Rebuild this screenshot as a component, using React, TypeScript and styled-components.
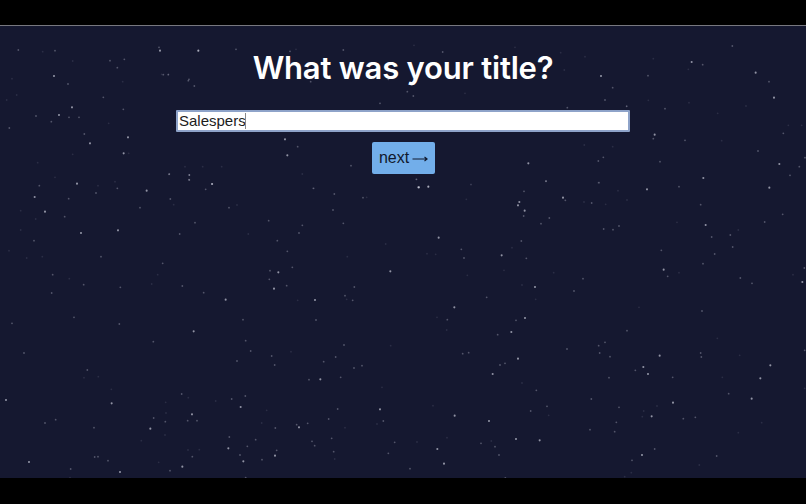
import styled, { createGlobalStyle } from 'styled-components';

const GlobalStyle = createGlobalStyle`
  html, body {
    margin: 0;
    height: 100%;
    background: #000;
  }
`;

const Page = styled.div`
  width: 806px;
  height: 504px;
  display: flex;
  flex-direction: column;
  background: #000;
  overflow: hidden;
`;

const Bar = styled.div<{ $height: number }>`
  height: ${(p) => p.$height}px;
  flex: none;
  background: #000;
`;

const Screen = styled.main`
  position: relative;
  flex: 1;
  display: flex;
  flex-direction: column;
  align-items: center;
  background: #151830;
  border-top: 1px solid #77787f;
`;

const Stars = styled.svg`
  position: absolute;
  top: 0;
  left: 0;
  filter: blur(0.4px);
`;

const Title = styled.h1`
  position: relative;
  margin: 22px 0 0;
  font-family: Inter, 'Noto Sans', sans-serif;
  font-size: 31px;
  line-height: 40px;
  font-weight: 600;
  letter-spacing: -0.2px;
  color: #fff;
`;

const Field = styled.div`
  position: relative;
  width: 454px;
  height: 22px;
  margin-top: 22px;
`;

const Answer = styled.input`
  display: block;
  box-sizing: border-box;
  width: 100%;
  height: 100%;
  padding: 0 1px 2px;
  border: 2px solid #8ea3c9;
  border-radius: 1px;
  outline: none;
  background: #fff;
  font-family: 'Liberation Sans', Arial, sans-serif;
  font-size: 15px;
  color: #1c1c1c;
`;

const Caret = styled.span`
  position: absolute;
  top: 3px;
  left: 69px;
  width: 1px;
  height: 16px;
  background: #8a8a8a;
`;

const NextButton = styled.button`
  position: relative;
  display: flex;
  align-items: center;
  justify-content: center;
  gap: 3px;
  width: 63px;
  height: 32px;
  margin-top: 10px;
  padding: 0 0 0 1px;
  border: none;
  border-radius: 2px;
  background: #72aeea;
  font-family: 'Liberation Sans', Arial, sans-serif;
  font-size: 16px;
  color: #10182c;
`;

const ArrowIcon = () => (
  <svg width="16" height="9" viewBox="0 0 16 9" fill="none" stroke="#10182c" strokeWidth="1.1">
    <path d="M0.5 5h14.5M12.5 3l2.7 2-2.7 2" />
  </svg>
);

// sky read off the reference: crop origin, then x,y pairs at 3x by brightness
type Sky = { ox: number; oy: number; bright: number[]; mid: number[]; faint: number[] };

const skies: Sky[] = [
  {
    ox: 0, oy: 170,
    bright: [104,81,231,41,440,62,636,42,135,125,243,189,354,181,945,390,835,307,1171,304,822,356,677,389],
    mid: [206,86,420,113,511,87,567,29,568,15,507,13,617,58,352,55,118,47,288,69,687,113,806,152,940,55,999,120,1089,83,194,140,539,192,102,212,303,260,488,280,158,314,251,344,361,352,155,369,611,368,547,348,222,442,810,302,808,328,877,292,860,347,1035,377,1058,391,1063,351,907,166,897,189,832,212,862,244,1003,72,1030,160,585,158,948,450,358,462,36,460,729,449],
    faint: [165,22,294,47,345,35,62,122,107,147,62,180,27,242,80,264,127,260,208,326,473,314,455,342,521,104,711,105,1100,82,1157,222,1042,260,1040,388,893,391,745,192,907,12],
  },
  {
    ox: 403, oy: 170,
    bright: [48,52,107,203,732,58,345,106,365,122,349,96,480,83,296,256,396,351,366,444,908,165,1099,53,901,24,154,412,1198,336,782,299],
    mid: [76,50,40,28,429,33,363,64,487,91,362,138,439,144,414,161,566,99,588,38,828,50,893,104,648,168,602,177,630,179,1161,16,1139,133,1085,156,982,195,989,231,926,201,935,252,775,241,900,281,794,319,1012,324,1047,340,1204,294,540,326,513,363,370,265,355,213,175,238,183,264,251,382,897,423,133,449,339,451],
    faint: [204,44,190,88,645,62,608,103,672,90,543,96,327,233,72,251,98,253,193,316,303,301,357,345,398,388,828,308,1170,314,1006,180,822,157,102,442,708,412,452,308],
  },
  {
    ox: 0, oy: 325,
    bright: [581,19,18,225,335,235,722,246,576,268,451,311,897,307,961,163,1140,253,685,370,730,409,825,392,547,425,360,441,87,411],
    mid: [737,47,1032,60,971,110,1007,96,824,120,815,93,711,108,752,78,1062,129,1086,122,927,164,1022,157,262,135,72,84,460,50,736,213,695,222,545,207,135,294,167,284,282,308,461,279,496,290,591,287,563,287,826,309,890,299,923,295,986,282,1013,252,1150,288,995,340,936,349,944,362,688,336,767,344,742,364,720,390,786,404,830,376,577,395,284,396,294,395,324,407,510,437,212,432,737,458,1184,352,1165,385,1001,380],
    faint: [252,158,295,155,334,193,647,228,497,232,498,264,565,218,495,330,424,347,564,375,598,374,476,412,1146,187,1172,62,873,80,1035,308,1131,297,785,294,800,256,1004,402,210,458],
  },
  {
    ox: 403, oy: 325,
    bright: [325,21,345,101,269,147,155,272,258,288,410,346,746,274,810,233,1046,221,1072,160,1102,121,770,92,721,126,735,147,717,390,123,416,103,372,339,342],
    mid: [284,29,179,86,197,83,291,120,306,115,400,196,432,244,383,258,648,247,640,292,635,320,561,314,621,95,590,84,587,62,606,52,672,17,492,72,697,136,809,157,893,84,895,96,841,281,877,277,755,372,234,355,276,365,288,390,21,431,565,222,618,158,1205,76,977,206,941,393,687,406,307,459],
    faint: [131,15,357,174,437,271,42,351,132,338,90,242,265,348,722,258,718,275,1076,293,1006,323,958,157,1010,91,943,40,1205,190,762,243,889,420,685,443,665,455],
  },
  {
    ox: 620, oy: 26,
    bright: [407,140,462,215,478,414,215,108,104,326],
    mid: [84,149,447,167,248,116,135,248,195,343,120,407,100,338,490,322,414,375,337,60,20,241,538,422,555,395],
    faint: [205,130,85,223,207,230,293,262,305,344,378,240,505,298,100,98,545,298],
  },
  {
    ox: 0, oy: 0,
    bright: [162,228,216,322,480,152,595,152],
    mid: [55,150,165,152,330,182,373,178,352,203,310,292,204,252,505,224,490,224,567,238,583,258,370,328,477,142],
    faint: [36,236,20,300,368,245,218,183,50,285,128,155],
  },
  {
    ox: 0, oy: 110,
    bright: [177,15,270,100,371,130,384,82],
    mid: [154,35,28,54,253,72,207,22,237,22,108,18],
    faint: [326,40,218,133,113,158,386,130],
  },
  {
    ox: 160, oy: 40,
    bright: [375,298,382,346,1105,370,1323,108,775,442,805,440],
    mid: [115,32,85,122,1358,143,1335,180,1222,203,660,190,742,155,760,168,452,125,685,118,413,320,573,377,1315,363,1330,352,88,405,88,420,157,432,28,402,1158,424],
    faint: [5,103,25,103,915,160,1213,90,1275,50,1400,198,1273,315,1358,320,770,418,75,380,128,380,185,380,1315,428,933,433,462,445],
  },
  {
    ox: 200, oy: 26,
    bright: [],
    mid: [270,76,430,72,728,78,108,70],
    faint: [288,70,642,58,1082,80,945,64],
  },
];

const App = () => {
  const dots = skies.flatMap((sky) =>
    (['bright', 'mid', 'faint'] as const).flatMap((level) =>
      sky[level].flatMap((v, i, all) =>
        i % 2 === 0
          ? [{ x: sky.ox + v / 3, y: sky.oy + all[i + 1] / 3 - 26, level }]
          : [],
      ),
    ),
  );
  const look = {
    bright: { r: 1.05, o: 0.6 },
    mid: { r: 0.9, o: 0.3 },
    faint: { r: 0.9, o: 0.11 },
  };

  return (
    <>
      <GlobalStyle />
      <Page>
        <Bar $height={25} />
        <Screen>
          <Stars width="806" height="452" viewBox="0 0 806 452">
            {dots.map((s, i) => (
              <circle key={i} cx={s.x} cy={s.y} r={look[s.level].r} fill="#e4e6f2" opacity={look[s.level].o} />
            ))}
          </Stars>
          <Title>What was your title?</Title>
          <Field>
            <Answer defaultValue="Salespers" />
            <Caret />
          </Field>
          <NextButton>
            next
            <ArrowIcon />
          </NextButton>
        </Screen>
        <Bar $height={26} />
      </Page>
    </>
  );
};

export default App;
